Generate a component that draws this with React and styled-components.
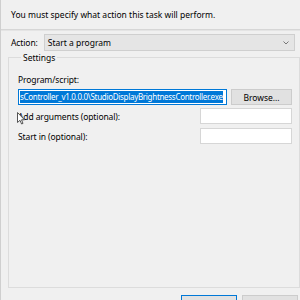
import styled, { createGlobalStyle } from 'styled-components';

const Global = createGlobalStyle`
    html, body {
        margin:0;
        padding:0;
        background:#f0f0f0;
    }
    body {
        font-family:"Noto Sans", "Open Sans", sans-serif;
        font-size:8.5px;
        color:#000;
    }
`;

const Window = styled.div`
    position:relative;
    width:300px;
    height:300px;
    overflow:hidden;
    box-sizing:border-box;
    border-left:1px solid #cfcfcf;
    background:#f0f0f0;
`;

const Header = styled.div`
    height:29px;
    display:flex;
    align-items:center;
    padding-left:10px;
    background:#f0f0f0;
`;

const Separator = styled.div`
    height:1px;
    background:#d6d6d6;
    border-bottom:1px solid #e4e4e4;
`;

const ActionRow = styled.div`
    display:flex;
    align-items:center;
    margin-top:3px;
    padding-left:10px;
    gap:6px;
`;

const Label = styled.span`
    white-space:nowrap;
    letter-spacing:-0.1px;
`;

const Select = styled.div`
    flex:1;
    height:17px;
    margin-right:5px;
    box-sizing:border-box;
    border:1px solid #cfcfcf;
    background:#e5e5e5;
    display:flex;
    align-items:center;
    justify-content:space-between;
    padding:0 5px 0 3px;
`;

const Group = styled.fieldset`
    margin:1px 0 0 7px;
    padding:0 7px 0 9px;
    height:236px;
    width:292px;
    box-sizing:border-box;
    border:1px solid #dcdcdc;
`;

const Legend = styled.legend`
    padding:0 2px;
    margin-left:3px;
`;

const Field = styled.div`
    display:flex;
    flex-direction:column;
    gap:4px;
    margin-top:11px;
`;

const Row = styled.div`
    display:flex;
    align-items:center;
    justify-content:space-between;
    height:16px;
    margin-top:${p => p.$gap || 0}px;
`;

const TextBox = styled.div`
    width:${p => p.$w}px;
    height:16px;
    box-sizing:border-box;
    background:#fff;
    border:1px solid ${p => p.$focus ? '#0078d7' : '#d6d6d6'};
    display:flex;
    align-items:center;
    overflow:hidden;
    white-space:nowrap;
    padding:0 1px;
`;

const Selected = styled.span`
    background:#0078d7;
    color:#fff;
    font-size:8px;
    letter-spacing:-0.3px;
    line-height:12px;
`;

const Button = styled.div`
    width:${p => p.$w || 61}px;
    height:16px;
    box-sizing:border-box;
    background:#e1e1e1;
    border:1px solid ${p => p.$primary ? '#0078d7' : '#cccccc'};
    display:flex;
    align-items:center;
    justify-content:center;
`;

const Footer = styled.div`
    display:flex;
    justify-content:flex-end;
    gap:5px;
    margin-top:7px;
    padding-right:2px;
`;

const Cursor = styled.svg`
    position:absolute;
    left:16px;
    top:112px;
`;

const App = () => {
    return (
        <Window>
            <Global />
            <Header>You must specify what action this task will perform.</Header>
            <Separator />
            <ActionRow>
                <Label>Action:</Label>
                <Select>
                    <span>Start a program</span>
                    <svg width="6" height="4" viewBox="0 0 6 4">
                        <path d="M0.5 0.5 L3 3 L5.5 0.5" fill="none" stroke="#777" strokeWidth="1" />
                    </svg>
                </Select>
            </ActionRow>
            <Group>
                <Legend>Settings</Legend>
                <Field>
                    <Label>Program/script:</Label>
                    <Row>
                        <TextBox $w={209} $focus>
                            <Selected>sController_v1.0.0.0\StudioDisplayBrightnessController.exe</Selected>
                        </TextBox>
                        <Button>Browse...</Button>
                    </Row>
                </Field>
                <Row $gap={3}>
                    <Label>Add arguments (optional):</Label>
                    <TextBox $w={92} />
                </Row>
                <Row $gap={4}>
                    <Label>Start in (optional):</Label>
                    <TextBox $w={92} />
                </Row>
            </Group>
            <Footer>
                <Button $w={56} $primary />
                <Button $w={56} />
            </Footer>
            <Cursor width="8" height="13" viewBox="0 0 8 13">
                <path d="M0.5 0.5 L0.5 10.5 L3 8.3 L4.6 12 L6 11.4 L4.5 7.8 L7.5 7.8 Z" fill="#fff" stroke="#555" strokeWidth="1" />
            </Cursor>
        </Window>
    );
};

export default App;
